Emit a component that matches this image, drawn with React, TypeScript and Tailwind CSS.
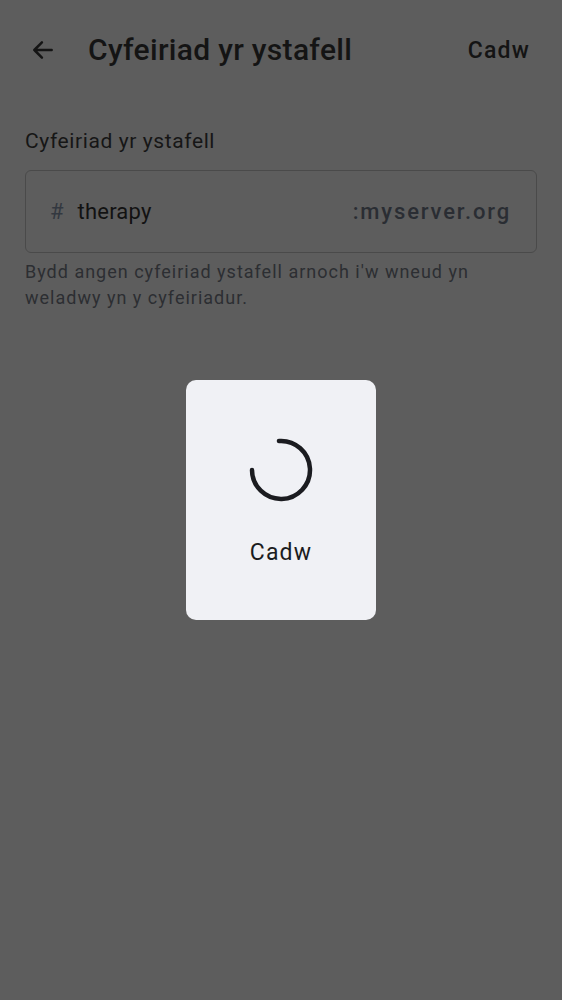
import React from "react";

export default function App() {
  return (
    <div className="relative w-[562px] h-[1000px] overflow-hidden bg-[#5d5d5d] font-['Roboto',sans-serif] text-[#141414]">
      {/* Top bar */}
      <header className="flex items-center h-[100px] pl-[30px] pr-[32px]">
        <svg width="26" height="26" viewBox="0 0 24 24" fill="none" stroke="#141414" strokeWidth="2.3" strokeLinecap="round" strokeLinejoin="round">
          <path d="M20 12H4M11 5l-7 7 7 7" />
        </svg>
        <h1 className="ml-[32px] text-[30px] leading-none font-medium tracking-[0.3px]">Cyfeiriad yr ystafell</h1>
        <span className="ml-auto text-[23px] leading-none font-medium tracking-[1.2px]">Cadw</span>
      </header>

      {/* Form */}
      <section className="px-[25px] pt-[31px]">
        <div className="text-[21px] leading-none text-[#161616] tracking-[0.6px]">Cyfeiriad yr ystafell</div>
        <div className="mt-[18px] h-[83px] flex items-center rounded-[6px] border border-[#4a4a4a] pl-[24px] pr-[25px] text-[22px]">
          <span className="text-[#333840]">#</span>
          <span className="ml-[14px] text-[#121212] tracking-[0.2px]">therapy</span>
          <span className="ml-auto font-medium text-[#2a2d33] tracking-[1.85px]">:myserver.org</span>
        </div>
        <p className="mt-[6px] text-[18px] leading-[26px] text-[#2c2e32] tracking-[1px]">
          Bydd angen cyfeiriad ystafell arnoch i'w wneud yn
          <br />
          weladwy yn y cyfeiriadur.
        </p>
      </section>

      {/* Progress dialog */}
      <div className="absolute left-[186px] top-[380px] w-[190px] h-[240px] rounded-[10px] bg-[#f0f1f5] flex flex-col items-center">
        <svg className="mt-[57px]" width="66" height="66" viewBox="0 0 66 66" fill="none">
          <path d="M4 33 A29 29 0 1 0 31 4" stroke="#1b1c20" strokeWidth="4.5" strokeLinecap="round" />
        </svg>
        <span className="mt-[38px] text-[23px] leading-none text-[#1b1c20] tracking-[1.2px]">Cadw</span>
      </div>
    </div>
  );
}
